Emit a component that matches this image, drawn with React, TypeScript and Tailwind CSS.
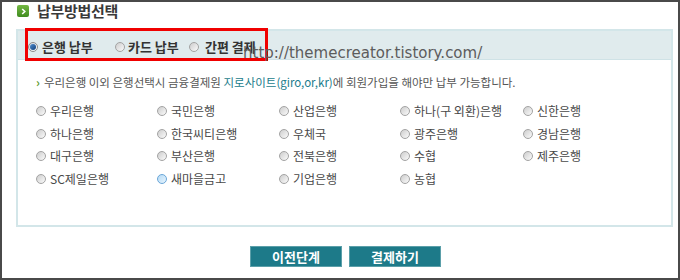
import React from 'react';

type RadioState = 'off' | 'on' | 'hover';

const BANK_ROWS: { name: string; state?: RadioState }[][] = [
  [{ name: '우리은행' }, { name: '국민은행' }, { name: '산업은행' }, { name: '하나(구 외환)은행' }, { name: '신한은행' }],
  [{ name: '하나은행' }, { name: '한국씨티은행' }, { name: '우체국' }, { name: '광주은행' }, { name: '경남은행' }],
  [{ name: '대구은행' }, { name: '부산은행' }, { name: '전북은행' }, { name: '수협' }, { name: '제주은행' }],
  [{ name: 'SC제일은행' }, { name: '새마을금고', state: 'hover' }, { name: '기업은행' }, { name: '농협' }],
];

function Radio({ state = 'off' }: { state?: RadioState }) {
  if (state === 'on') {
    return (
      <span className="flex h-[10px] w-[10px] shrink-0 items-center justify-center rounded-full border border-[#8c8c8c] bg-linear-to-br from-[#cfd6dc] to-white">
        <span className="h-[6px] w-[6px] rounded-full bg-linear-to-br from-[#4f8fd0] to-[#0f3f7a]" />
      </span>
    );
  }
  if (state === 'hover') {
    return (
      <span className="h-[10px] w-[10px] shrink-0 rounded-full border border-[#6aa6d8] bg-linear-to-br from-[#b7dbf5] to-[#e6f4fd]" />
    );
  }
  return (
    <span className="h-[10px] w-[10px] shrink-0 rounded-full border border-[#a3a3a3] bg-linear-to-br from-[#cdcdcd] to-[#fbfbfb]" />
  );
}

export default function App() {
  return (
    <div className="relative h-[280px] w-[680px] overflow-hidden border-2 border-[#4a4a4a] bg-white pr-[5px] pl-[14px] font-['Noto_Sans_CJK_KR','Noto_Sans',sans-serif]">
      {/* title */}
      <div className="flex h-[18px] items-center gap-[8px] pl-[1px]">
        <span className="flex h-[12px] w-[12px] items-center justify-center rounded-[2px] bg-linear-to-b from-[#74b843] to-[#3f8c1f]">
          <svg width="7" height="7" viewBox="0 0 7 7">
            <path d="M2.2 1 L4.8 3.5 L2.2 6" fill="none" stroke="#fff" strokeWidth="1.6" />
          </svg>
        </span>
        <h1 className="text-[15px] leading-[18px] font-bold tracking-[-0.3px] text-[#3a3a3a]">납부방법선택</h1>
      </div>

      {/* method box */}
      <div className="mt-[9px] h-[198px] border-2 border-[#d3e6e9]">
        <div className="flex h-[29px] items-center border-b border-[#cfe2e6] bg-[#e0ebed] pt-[3px] pl-[10px] text-[13px] leading-[16px] font-bold text-[#333]">
          <label className="flex w-[87px] items-center gap-[4px]">
            <Radio state="on" />
            은행 납부
          </label>
          <label className="flex w-[74px] items-center gap-[3px]">
            <Radio />
            카드 납부
          </label>
          <label className="flex items-center gap-[6px]">
            <Radio />
            간편 결제
          </label>
        </div>

        <div className="pt-[15px] pl-[18px]">
          <p className="flex items-center text-[11.5px] leading-[14px] text-[#555]">
            <span className="mr-[4px] text-[12px] font-bold text-[#5d9b2c]">›</span>
            우리은행 이외 은행선택시 금융결제원&nbsp;
            <span className="text-[#1a7c8c]">지로사이트(giro,or,kr)</span>
            에 회원가입을 해야만 납부 가능합니다.
          </p>

          <div className="mt-[11px] grid auto-rows-[22.5px] grid-cols-[121px_122px_121px_123px_1fr] text-[12px] leading-[14px] text-[#484848]">
            {BANK_ROWS.flat().map((bank) => (
              <label key={bank.name} className="flex items-center gap-[4px]">
                <Radio state={bank.state} />
                {bank.name}
              </label>
            ))}
          </div>
        </div>
      </div>

      {/* buttons */}
      <div className="mt-[19px] flex gap-[7px] pl-[234px]">
        <button className="h-[21px] w-[92px] border border-[#5b9fa9] bg-[#1d7a89] text-[13px] leading-[19px] font-bold text-white">
          이전단계
        </button>
        <button className="h-[21px] w-[92px] border border-[#5b9fa9] bg-[#1d7a89] text-[13px] leading-[19px] font-bold text-white">
          결제하기
        </button>
      </div>

      {/* annotation overlays */}
      <div className="pointer-events-none absolute top-[26px] left-[23px] h-[33px] w-[243px] border-[3px] border-[#f00000]" />
      <span className="pointer-events-none absolute top-[42px] left-[241px] font-['DejaVu_Sans',sans-serif] text-[15px] leading-[18px] text-[#5c5c5c]">
        http://themecreator.tistory.com/
      </span>
    </div>
  );
}
